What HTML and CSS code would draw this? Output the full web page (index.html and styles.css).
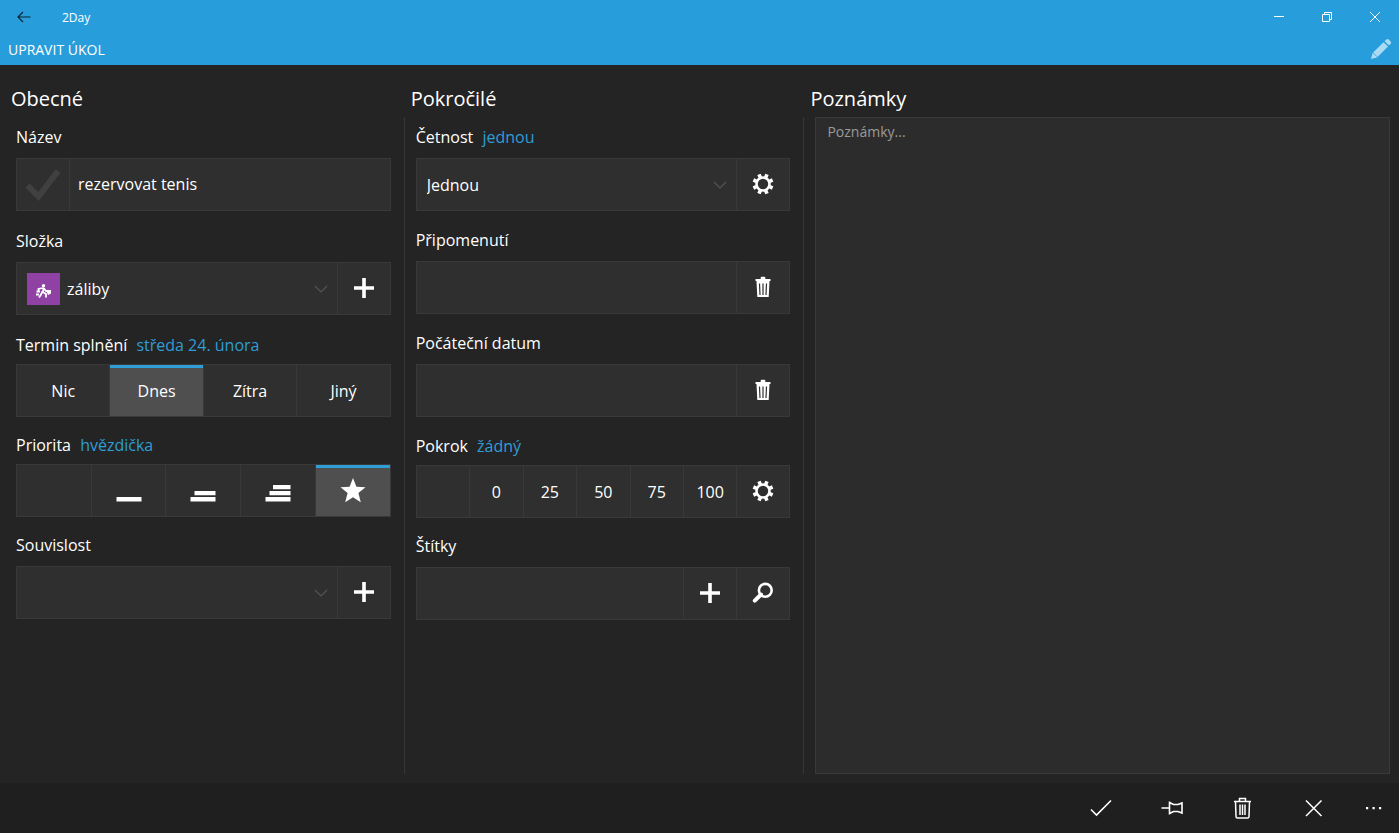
FILE: index.html
```html
<!DOCTYPE html>
<html lang="cs">
<head>
  <meta charset="UTF-8">
  <meta name="viewport" content="width=device-width, initial-scale=1.0">
  <title>2Day</title>
  <link rel="stylesheet" href="styles.css">
</head>
<body>

  <!-- Shared icons -->
  <svg class="sprite" aria-hidden="true">
    <symbol id="i-plus" viewBox="0 0 22 22"><path d="M11 1v20M1 11h20" stroke="currentColor" stroke-width="3.6"/></symbol>
    <symbol id="i-chevron" viewBox="0 0 14 8"><path d="M1 1l6 6 6-6" fill="none" stroke="currentColor" stroke-width="1.2"/></symbol>
    <symbol id="i-gear" viewBox="0 0 22 22">
      <circle cx="11" cy="11" r="6.500" fill="none" stroke="currentColor" stroke-width="2.600"/>
      <g stroke="currentColor" stroke-width="3.600">
        <path d="M11 .6v3.400M11 18v3.400M.6 11h3.400M18 11h3.400" transform="rotate(22.5 11 11)"/>
        <path d="M11 .6v3.400M11 18v3.400M.6 11h3.400M18 11h3.400" transform="rotate(67.5 11 11)"/>
      </g>
    </symbol>
    <symbol id="i-trash" viewBox="0 0 22 22">
      <path d="M3.500 3h5.200V1.600q0-.8.800-.8h3q.8 0 .8.800V3h5.200v2H3.500z" fill="currentColor"/>
      <path fill-rule="evenodd" d="M4.500 5h13l-.8 16H5.300zM6.900 7.500l.5 11.500h1.200l-.5-11.500zM10.400 7.500V19h1.200V7.500zM13.900 7.500L13.400 19h1.200l.5-11.500z" fill="currentColor"/>
    </symbol>
  </svg>

  <header class="header">
    <div class="titlebar">
      <button class="win-btn back" aria-label="Zpět">
        <svg width="14" height="12" viewBox="0 0 14 12"><path d="M13.5 6H1.2M6 1L1 6l5 5" fill="none" stroke="#0b2433" stroke-width="1.2"/></svg>
      </button>
      <span class="app-name">2Day</span>
      <button class="win-btn" aria-label="Minimalizovat">
        <svg width="12" height="12" viewBox="0 0 12 12"><path d="M1 5.5h10" stroke="currentColor"/></svg>
      </button>
      <button class="win-btn" aria-label="Obnovit">
        <svg width="12" height="12" viewBox="0 0 12 12"><path d="M1.5 3.5h7v7h-7zM3.5 3.5v-2h7v7h-2" fill="none" stroke="currentColor"/></svg>
      </button>
      <button class="win-btn" aria-label="Zavřít">
        <svg width="12" height="12" viewBox="0 0 12 12"><path d="M1 1l10 10M11 1L1 11" stroke="currentColor"/></svg>
      </button>
    </div>
    <div class="page-head">
      <h1>UPRAVIT ÚKOL</h1>
      <svg class="pencil" width="22" height="22" viewBox="0 0 22 22">
        <path d="M1 21l1.600-6L13.500 4.200l4.500 4.400L7 19.400zM14.600 3.200l1.700-1.800q1.200-1 2.500.2l1.800 1.800q1.100 1.200.1 2.400l-1.700 1.700z" fill="currentColor"/>
        <path d="M2.800 14.500l4.700 4.700" stroke="#289ddb" stroke-width=".8"/>
      </svg>
    </div>
  </header>

  <main class="columns">

    <!-- General -->
    <section class="column general">
      <h2>Obecné</h2>
      <div class="column-body">
        <div class="field">
          <label class="caption" for="title">Název</label>
          <div class="box">
            <label class="done">
              <input type="checkbox" class="hidden-input" aria-label="Hotovo">
              <svg width="36" height="36" viewBox="0 0 36 36"><path d="M2.500 18.500L13.500 29.500 33 4" fill="none" stroke="currentColor" stroke-width="6"/></svg>
            </label>
            <input type="text" class="text title-text" id="title" value="rezervovat tenis">
          </div>
        </div>

        <div class="field">
          <label class="caption" for="folder">Složka</label>
          <div class="box">
            <svg class="folder-icon" width="33" height="32" viewBox="0 0 33 32">
              <circle cx="16.500" cy="12.800" r="1.700" fill="#fff"/>
              <path d="M16.500 14.500L16 19l3 2v3.500M15.500 18.500L14 21.500l-2 3M17 15.500l2 2.500h3M15.500 15l-4 1v2.500M9.500 18.500h3.500M9 21.500h3" fill="none" stroke="#fff" stroke-width="1.800"/>
              <path d="M19 17.500l5-.5v3.500l-3 1.500z" fill="#fff"/>
            </svg>
            <div class="select with-icon">
              <select id="folder"><option>záliby</option></select>
              <svg width="14" height="8"><use href="#i-chevron"/></svg>
            </div>
            <button class="cell" aria-label="Přidat složku"><svg width="22" height="22"><use href="#i-plus"/></svg></button>
          </div>
        </div>

        <fieldset class="field compact">
          <legend class="caption">Termin splnění <a href="#">středa 24. února</a></legend>
          <div class="box">
            <label class="segment"><input type="radio" class="hidden-input" name="due">Nic</label>
            <label class="segment"><input type="radio" class="hidden-input" name="due" checked>Dnes</label>
            <label class="segment"><input type="radio" class="hidden-input" name="due">Zítra</label>
            <label class="segment"><input type="radio" class="hidden-input" name="due">Jiný</label>
          </div>
        </fieldset>

        <fieldset class="field compact">
          <legend class="caption">Priorita <a href="#">hvězdička</a></legend>
          <div class="box">
            <label class="segment"><input type="radio" class="hidden-input" name="priority" aria-label="žádná"></label>
            <label class="segment"><input type="radio" class="hidden-input" name="priority" aria-label="nízká">
              <svg width="26" height="24" viewBox="0 0 26 24"><path d="M.5 18h25v4.500H.5z" fill="currentColor"/></svg>
            </label>
            <label class="segment"><input type="radio" class="hidden-input" name="priority" aria-label="střední">
              <svg width="26" height="24" viewBox="0 0 26 24"><path d="M.5 18h25v4.500H.5zM4.500 12h21v4.200h-21z" fill="currentColor"/></svg>
            </label>
            <label class="segment"><input type="radio" class="hidden-input" name="priority" aria-label="vysoká">
              <svg width="26" height="24" viewBox="0 0 26 24"><path d="M.5 18h25v4.500H.5zM4.500 12h21v4.200h-21zM8 6h17.500v4.200H8z" fill="currentColor"/></svg>
            </label>
            <label class="segment"><input type="radio" class="hidden-input" name="priority" aria-label="hvězdička" checked>
              <svg width="26" height="26" viewBox="0 0 26 26"><path d="M13 0l3.400 8.700 9.100.5-7.100 5.800 2.400 9.200L13 19.200l-7.800 5 2.400-9.200L.5 9.200l9.100-.5z" fill="currentColor"/></svg>
            </label>
          </div>
        </fieldset>

        <div class="field">
          <label class="caption" for="context">Souvislost</label>
          <div class="box">
            <div class="select">
              <select id="context"><option></option></select>
              <svg width="14" height="8"><use href="#i-chevron"/></svg>
            </div>
            <button class="cell" aria-label="Přidat souvislost"><svg width="22" height="22"><use href="#i-plus"/></svg></button>
          </div>
        </div>
      </div>
    </section>

    <!-- Advanced -->
    <section class="column advanced">
      <h2>Pokročilé</h2>
      <div class="column-body">
        <div class="field">
          <div class="caption"><label for="repeat">Četnost</label> <a href="#">jednou</a></div>
          <div class="box">
            <div class="select">
              <select id="repeat"><option>Jednou</option></select>
              <svg width="14" height="8"><use href="#i-chevron"/></svg>
            </div>
            <button class="cell" aria-label="Nastavení četnosti"><svg width="22" height="22"><use href="#i-gear"/></svg></button>
          </div>
        </div>

        <div class="field">
          <label class="caption" for="reminder">Připomenutí</label>
          <div class="box">
            <input type="text" class="text" id="reminder">
            <button class="cell" aria-label="Smazat připomenutí"><svg width="22" height="22"><use href="#i-trash"/></svg></button>
          </div>
        </div>

        <div class="field">
          <label class="caption" for="start">Počáteční datum</label>
          <div class="box">
            <input type="text" class="text" id="start">
            <button class="cell" aria-label="Smazat datum"><svg width="22" height="22"><use href="#i-trash"/></svg></button>
          </div>
        </div>

        <fieldset class="field compact">
          <legend class="caption">Pokrok <a href="#">žádný</a></legend>
          <div class="box">
            <label class="segment"><input type="radio" class="hidden-input" name="progress" aria-label="žádný"></label>
            <label class="segment"><input type="radio" class="hidden-input" name="progress">0</label>
            <label class="segment"><input type="radio" class="hidden-input" name="progress">25</label>
            <label class="segment"><input type="radio" class="hidden-input" name="progress">50</label>
            <label class="segment"><input type="radio" class="hidden-input" name="progress">75</label>
            <label class="segment"><input type="radio" class="hidden-input" name="progress">100</label>
            <button class="cell" aria-label="Nastavení pokroku"><svg width="22" height="22"><use href="#i-gear"/></svg></button>
          </div>
        </fieldset>

        <div class="field">
          <label class="caption" for="tags">Štítky</label>
          <div class="box">
            <input type="text" class="text" id="tags">
            <button class="cell" aria-label="Přidat štítek"><svg width="22" height="22"><use href="#i-plus"/></svg></button>
            <button class="cell" aria-label="Hledat štítek">
              <svg width="22" height="22" viewBox="0 0 22 22">
                <circle cx="13.300" cy="8.300" r="6.400" fill="none" stroke="currentColor" stroke-width="2.600"/>
                <path d="M9 12.500L2.800 18.700" stroke="currentColor" stroke-width="4" stroke-linecap="round"/>
              </svg>
            </button>
          </div>
        </div>
      </div>
    </section>

    <!-- Notes -->
    <section class="column notes">
      <h2><label for="notes">Poznámky</label></h2>
      <div class="column-body">
        <textarea id="notes" placeholder="Poznámky..."></textarea>
      </div>
    </section>
  </main>

  <footer class="commands">
    <button aria-label="Uložit">
      <svg width="24" height="24" viewBox="0 0 24 24"><path d="M2 13.500l5.500 5.500L22 4.500" fill="none" stroke="currentColor" stroke-width="1.600"/></svg>
    </button>
    <button aria-label="Připnout">
      <svg width="24" height="24" viewBox="0 0 24 24"><path d="M1.500 12h8M9.500 5.500v13M9.500 6.500l4 2h4.500l4-1.500v10l-4-1.500h-4.500l-4 2" fill="none" stroke="currentColor" stroke-width="1.600"/></svg>
    </button>
    <button aria-label="Smazat">
      <svg width="24" height="24" viewBox="0 0 24 24"><path d="M3 5.500h17M4.500 5.500l.5 15q0 1.500 1.500 1.500h10q1.500 0 1.500-1.500l.5-15M8.500 5V2.500h6V5M9 8.500v10.500M11.500 8.500v10.500M14 8.500v10.500" fill="none" stroke="currentColor" stroke-width="1.500"/></svg>
    </button>
    <button aria-label="Zrušit">
      <svg width="24" height="24" viewBox="0 0 24 24"><path d="M4 4.500l15.500 15.500M19.500 4.500L4 20" stroke="currentColor" stroke-width="1.500"/></svg>
    </button>
    <button class="more" aria-label="Další">
      <svg width="18" height="4" viewBox="0 0 18 4"><path d="M1 1h2.200v2.200H1zM7.500 1h2.200v2.200H7.500zM14 1h2.200v2.200H14z" fill="currentColor"/></svg>
    </button>
  </footer>

</body>
</html>
```
FILE: styles.css
```css
* { box-sizing: border-box; margin: 0; padding: 0; }

body {
  min-height: 100vh;
  display: flex;
  flex-direction: column;
  background: #242424;
  color: #fff;
  font-family: "Open Sans", "Noto Sans", sans-serif;
  font-size: 16px;
  line-height: 22px;
}

button, input, select, textarea {
  font: inherit;
  color: inherit;
  background: none;
  border: none;
  border-radius: 0;
  outline: none;
}
button { display: flex; align-items: center; justify-content: center; cursor: pointer; }
svg { display: block; flex: none; }
a { color: #2f9dd6; text-decoration: none; margin-left: 5px; }

.sprite { position: absolute; width: 0; height: 0; }
.hidden-input { position: absolute; opacity: 0; pointer-events: none; }

/* — HEADER ————————————— */
.header { background: #289ddb; }
.titlebar { display: flex; height: 32px; }
.win-btn { width: 48px; padding-top: 1px; }
.app-name {
  flex: 1;
  padding-left: 14px;
  font-size: 12px;
  line-height: 35px;
}
.page-head {
  display: flex;
  justify-content: space-between;
  height: 33px;
  padding: 6px 7px 5px 8px;
}
.page-head h1 { font-size: 14px; font-weight: 400; line-height: 24px; }
.pencil { color: #a9dbf5; }

/* — COLUMNS ————————————— */
.columns {
  flex: 1;
  display: grid;
  grid-template-columns: 2fr 2fr 3fr;
  padding: 20px 0 9px;
}
.column { display: flex; flex-direction: column; }
.column h2 {
  height: 32px;
  padding-left: 11px;
  font-size: 20px;
  font-weight: 400;
  line-height: 28px;
}
.column-body {
  flex: 1;
  margin-left: 4px;
  border-left: 1px solid #363636;
  padding: 9px 9px 0 11px;
}
.general .column-body { border-color: transparent; }
.notes .column-body { display: flex; padding-top: 0; }

/* — FIELDS ————————————— */
.field { border: none; margin-bottom: 18px; }
.general .field { margin-bottom: 19px; }
.column-body .compact { margin-bottom: 17px; }
.caption { display: block; margin-bottom: 10px; }
.compact .caption { margin-bottom: 8px; }
.box {
  display: flex;
  height: 53px;
  background: #2f2f2f;
  border: 1px solid #393939;
}
.text { flex: 1; min-width: 0; padding: 0 10px; }
.title-text { padding: 0 8px 2px; }
.done {
  display: flex;
  align-items: center;
  justify-content: center;
  width: 53px;
  border-right: 1px solid #393939;
  color: #404040;
}
.done input:checked + svg { color: #fff; }
.cell { width: 53px; padding-bottom: 2px; border-left: 1px solid #393939; }

.select { flex: 1; display: grid; align-items: center; min-width: 0; }
.select select {
  grid-area: 1 / 1;
  height: 100%;
  padding: 0 34px 0 10px;
  appearance: none;
}
.select option { background: #2f2f2f; }
.select svg {
  grid-area: 1 / 1;
  justify-self: end;
  margin-right: 9px;
  color: #555;
  pointer-events: none;
}
.with-icon select { padding-left: 7px; }
.folder-icon { align-self: center; margin-left: 10px; background: #8f42a3; }

.segment {
  flex: 1;
  display: flex;
  align-items: center;
  justify-content: center;
  cursor: pointer;
}
.segment + .segment { border-left: 1px solid #393939; }
.segment:has(:checked) { background: #4f4f4f; box-shadow: inset 0 3px #2f9dd6; }

/* — NOTES ————————————— */
textarea {
  flex: 1;
  min-width: 0;
  padding: 3px 11px;
  background: #2c2c2c;
  border: 1px solid #393939;
  font-size: 14px;
  resize: none;
}
textarea::placeholder { color: #9a9a9a; opacity: 1; }

/* — COMMAND BAR ————————————— */
.commands {
  display: flex;
  justify-content: flex-end;
  height: 50px;
  background: #1f1f1f;
}
.commands button { width: 71px; }
.commands .more { width: 50px; }

/* — SMALL SCREENS ————————————— */
@media (max-width: 900px) {
  .columns { grid-template-columns: 1fr; }
  textarea { min-height: 200px; }
}
```
